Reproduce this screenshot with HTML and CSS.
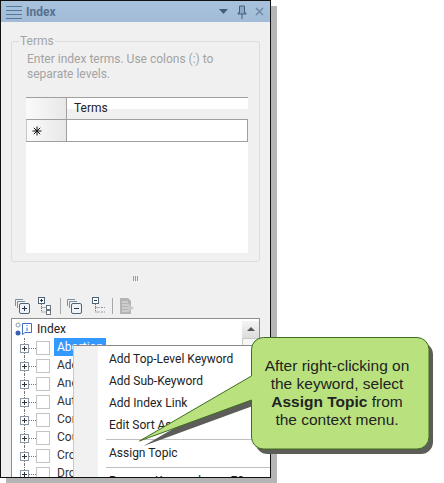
FILE: index.html
```html
<!DOCTYPE html>
<html>
<head>
  <title>Index</title>
  <link rel="stylesheet" href="styles.css">
</head>
<body>
  <div class="panel">
    <div class="titlebar">
      <svg class="grip-lines" width="16" height="18" viewBox="0 0 16 18">
        <path d="M0 3.500H16M0 7.500H16M0 11.500H16M0 15.500H16" stroke="#54779c" fill="none"/>
      </svg>
      <span class="title">Index</span>
      <svg class="win-icons" width="46" height="16" viewBox="0 0 46 16">
        <path d="M0 5H9L4.500 10Z" fill="#3f5f80"/>
        <path d="M20.500 2H25.500V9H27V10H19V9H20.500ZM23 10V15" fill="#8fa9c4" stroke="#3f5f80"/>
        <path d="M37 4L44 11M44 4L37 11" stroke="#6f8aa6" stroke-width="1.600" fill="none"/>
      </svg>
    </div>

    <div class="body">
      <div class="terms-box">
        <div class="legend">Terms</div>
        <p class="hint">Enter index terms. Use colons (:) to separate levels.</p>
        <div class="grid">
          <div class="grid-row head-row">
            <div class="corner"></div>
            <div class="col-head">Terms</div>
          </div>
          <div class="grid-row new-row">
            <div class="corner star">
              <svg width="10" height="10" viewBox="0 0 10 10">
                <path d="M5 0.500V9.500M0.500 5H9.500M1.800 1.800L8.200 8.200M8.200 1.800L1.800 8.200" stroke="#111" fill="none"/>
              </svg>
            </div>
            <div class="cell"></div>
          </div>
        </div>
      </div>

      <div class="splitter">
        <span></span><span></span><span></span>
      </div>

      <div class="toolbar">
        <svg width="18" height="18" viewBox="0 0 18 18">
          <path d="M1.500 9V2.500H9M3.500 11V4.500H11" fill="none" stroke="#7e8f9e"/>
          <rect x="5.500" y="6.500" width="10" height="10" rx="1.500" fill="#eef3f7" stroke="#4f6477"/>
          <path d="M8 11.500H13M10.500 9V14" stroke="#28384a" fill="none"/>
        </svg>
        <svg class="tree-icon" width="14" height="18" viewBox="0 0 14 18">
          <rect x="0.500" y="0.500" width="6" height="6" fill="#fff" stroke="#4f6477"/>
          <path d="M2 3.500H5M3.500 2V5" stroke="#28384a" fill="none"/>
          <path d="M3.500 7V15H8M3.500 10.500H8" stroke="#66727e" stroke-dasharray="1 1" fill="none"/>
          <rect x="8.500" y="8.500" width="4" height="4" fill="#fff" stroke="#66727e"/>
          <rect x="8.500" y="13.500" width="4" height="4" fill="#fff" stroke="#66727e"/>
        </svg>
        <i class="tool-sep first-sep"></i>
        <svg width="18" height="18" viewBox="0 0 18 18">
          <path d="M1.500 9V2.500H9M3.500 11V4.500H11" fill="none" stroke="#7e8f9e"/>
          <rect x="5.500" y="6.500" width="10" height="10" rx="1.500" fill="#eef3f7" stroke="#4f6477"/>
          <path d="M8 11.500H13" stroke="#28384a" fill="none"/>
        </svg>
        <svg class="tree-icon collapse-tree" width="14" height="18" viewBox="0 0 14 18">
          <rect x="0.500" y="0.500" width="6" height="6" fill="#fff" stroke="#4f6477"/>
          <path d="M2 3.500H5" stroke="#28384a" fill="none"/>
          <path d="M3.500 7V15H8M3.500 10.500H8" stroke="#66727e" stroke-dasharray="1 1" fill="none"/>
          <path d="M9 10.500H13M9 15H13" stroke="#8a96a2" stroke-dasharray="2 1" fill="none"/>
        </svg>
        <i class="tool-sep"></i>
        <svg width="16" height="18" viewBox="0 0 16 18">
          <path d="M1 1H9L12 4V17H1Z" fill="#b4b4b4"/>
          <path d="M3 5H9M3 8H10M3 11H10M3 14H10" stroke="#e4e4e4" fill="none"/>
          <path d="M9 7L15 11L9 15Z" fill="#c8c8c8"/>
        </svg>
      </div>

      <div class="tree">
        <div class="tree-root">
          <svg width="20" height="16" viewBox="0 0 20 16">
            <circle cx="3" cy="4" r="2" fill="#fff" stroke="#8a9bb0"/>
            <circle cx="3" cy="12" r="2.500" fill="#3c5fae"/>
            <path d="M7.500 2.500H16.500V11.500H10L7.500 13.500Z" fill="#fff" stroke="#3c6fc0"/>
            <path d="M12 4V5M12 6.500V10" stroke="#3c6fc0" fill="none"/>
          </svg>
          <span>Index</span>
        </div>
        <div class="tree-row"><b class="plus"></b><b class="check"></b><span class="kw selected">Abortion</span></div>
        <div class="tree-row"><b class="plus"></b><b class="check"></b><span class="kw">Adoption</span></div>
        <div class="tree-row"><b class="plus"></b><b class="check"></b><span class="kw">Anemia</span></div>
        <div class="tree-row"><b class="plus"></b><b class="check"></b><span class="kw">Autism</span></div>
        <div class="tree-row"><b class="plus"></b><b class="check"></b><span class="kw">Contraception</span></div>
        <div class="tree-row"><b class="plus"></b><b class="check"></b><span class="kw">Cough</span></div>
        <div class="tree-row"><b class="plus"></b><b class="check"></b><span class="kw">Croup</span></div>
        <div class="tree-row"><b class="plus"></b><b class="check"></b><span class="kw">Drowning</span></div>
        <div class="scrollbar">
          <div class="scroll-up"></div>
          <div class="scroll-track"></div>
        </div>
      </div>
    </div>

    <div class="context-menu">
      <div class="menu-item">Add Top-Level Keyword</div>
      <div class="menu-item">Add Sub-Keyword</div>
      <div class="menu-item">Add Index Link</div>
      <div class="menu-item">Edit Sort As</div>
      <div class="menu-sep"></div>
      <div class="menu-item">Assign Topic</div>
      <div class="menu-sep"></div>
      <div class="menu-item">Remove Keyword<span class="key">F2</span></div>
    </div>
  </div>

  <div class="callout">
    <svg class="callout-shape" width="300" height="125" viewBox="0 0 300 125">
      <path d="M124.500 0.500H278A12 12 0 0 1 290 12.500V100A12 12 0 0 1 278 112H124.500A12 12 0 0 1 112.500 100V63L0.500 104L112.500 39V12.500A12 12 0 0 1 124.500 0.500Z" transform="translate(4 5)" fill="#5c5d58"/>
      <path d="M124.500 0.500H278A12 12 0 0 1 290 12.500V100A12 12 0 0 1 278 112H124.500A12 12 0 0 1 112.500 100V63L0.500 104L112.500 39V12.500A12 12 0 0 1 124.500 0.500Z" fill="#b9e27f" stroke="#3f6b22"/>
    </svg>
    <div class="callout-text">After right-clicking on<br>the keyword, select<br><strong>Assign Topic</strong> from<br>the context menu.</div>
  </div>
</body>
</html>
```

FILE: styles.css
```css
body {
  margin: 0;
  background-color: #fff;
  font-family: Roboto, sans-serif;
  position: relative;
  height: 483px;
  overflow: hidden;
}

.panel {
  position: relative;
  width: 269px;
  height: 476px;
  border: 1px solid #111;
  background-color: #f0f0f0;
  box-shadow: 6px 6px 0 #b5b5b5;
  overflow: hidden;
}

.titlebar {
  display: flex;
  align-items: center;
  height: 21px;
  background: linear-gradient(#a9c2dc, #a2bcd8);
}

.grip-lines {
  margin-left: 5px;
  flex: none;
}

.title {
  margin-left: 4px;
  font-size: 12px;
  font-weight: 700;
  color: #56728e;
}

.win-icons {
  margin-left: auto;
  margin-right: 5px;
}

.body {
  padding: 19px 10px 0 10px;
}

.terms-box {
  position: relative;
  height: 221px;
  box-sizing: border-box;
  border: 1px solid #dcdcdc;
  border-radius: 3px;
  padding: 10px 11px 0 14px;
}

.legend {
  position: absolute;
  top: -9px;
  left: 7px;
  padding: 0 1px;
  background-color: #f0f0f0;
  font-size: 12px;
  line-height: 16px;
  color: #a3a3a3;
}

.hint {
  margin: 0 0 0 1px;
  width: 200px;
  font-size: 12px;
  line-height: 15px;
  color: #a3a3a3;
}

.grid {
  height: 156px;
  margin-top: 15px;
  background-color: #fff;
}

.grid-row {
  display: flex;
}

.head-row {
  height: 21px;
  border-top: 1px solid #a0a0a0;
}

.new-row {
  height: 21px;
  border-top: 1px solid #a0a0a0;
  border-bottom: 1px solid #a0a0a0;
}

.corner {
  width: 40px;
  flex: none;
  border-right: 1px solid #a0a0a0;
  background: linear-gradient(90deg, #fafafa, #e8e8e8);
}

.star {
  display: flex;
  align-items: center;
  box-sizing: border-box;
  width: 41px;
  padding-left: 5px;
  border-left: 1px solid #c8c8c8;
}

.col-head {
  flex: 1;
  padding-left: 7px;
  font-size: 12px;
  line-height: 21px;
  color: #222;
  background: linear-gradient(#fff 50%, #f0f0f0 50%);
}

.cell {
  flex: 1;
  border-right: 1px solid #a0a0a0;
}

.splitter {
  display: flex;
  justify-content: center;
  gap: 1px;
  height: 5px;
  margin-top: 14px;
}

.splitter span {
  width: 1px;
  background-color: #9b9b9b;
}

.toolbar {
  display: flex;
  align-items: center;
  height: 20px;
  margin-top: 15px;
  padding-left: 3px;
  gap: 6px;
}

.tool-sep {
  width: 1px;
  height: 16px;
  background-color: #a8a8a8;
}

.first-sep {
  margin-left: 2px;
  margin-right: -1px;
}

.collapse-tree {
  margin-left: 2px;
}

.tree {
  position: relative;
  height: 200px;
  box-sizing: border-box;
  margin-top: 2px;
  border: 1px solid #8e8e8e;
  background-color: #fff;
  padding-top: 1px;
}

.tree-root {
  display: flex;
  align-items: center;
  height: 18px;
  padding-left: 3px;
  font-size: 12px;
  color: #222;
}

.tree-root span {
  margin-left: 2px;
}

.tree-row {
  position: relative;
  display: flex;
  align-items: center;
  height: 18px;
  padding-left: 8px;
  font-size: 12px;
  color: #333;
}

/* dotted connectors */
.tree-row::before {
  content: "";
  position: absolute;
  left: 12px;
  top: 0;
  height: 18px;
  border-left: 1px dotted #777;
}

.tree-row::after {
  content: "";
  position: absolute;
  left: 17px;
  top: 10px;
  width: 7px;
  border-top: 1px dotted #777;
}

.plus {
  position: relative;
  width: 7px;
  height: 7px;
  margin-top: 2px;
  border: 1px solid #8a97a8;
  background: #fff;
  flex: none;
  z-index: 1;
}

.plus::before {
  content: "";
  position: absolute;
  left: 1px;
  top: 3px;
  width: 5px;
  height: 1px;
  background-color: #333;
}

.plus::after {
  content: "";
  position: absolute;
  left: 3px;
  top: 1px;
  width: 1px;
  height: 5px;
  background-color: #333;
}

.check {
  width: 12px;
  height: 12px;
  margin-left: 7px;
  margin-top: 1px;
  border: 1px solid #c4c4c4;
  background-color: #fff;
  flex: none;
}

.kw {
  margin-left: 4px;
  padding: 0 3px;
  line-height: 18px;
}

.selected {
  background-color: #3399ff;
  color: #fff;
}

.scrollbar {
  position: absolute;
  top: 2px;
  right: 0;
  bottom: 0;
  width: 17px;
  background-color: #f0f0f0;
}

.scroll-up {
  height: 17px;
  background: linear-gradient(#f4f4f4, #dcdcdc);
  position: relative;
}

.scroll-up::before {
  content: "";
  position: absolute;
  left: 5px;
  top: 6px;
  border: 4px solid transparent;
  border-top: 0;
  border-bottom-color: #555;
}

.scroll-track {
  height: 100%;
  box-sizing: border-box;
  border: 1px solid #c8c8c8;
  background-color: #f7f7f7;
}

.context-menu {
  position: absolute;
  left: 72px;
  top: 344px;
  right: 0;
  bottom: 0;
  box-sizing: border-box;
  padding-top: 2px;
  border-top: 1px solid #8a8a8a;
  border-left: 1px solid #c8c8c8;
  background: linear-gradient(90deg, #f1f1f1 24px, #fff 24px);
  font-size: 12px;
  color: #222;
}

.menu-item {
  display: flex;
  height: 22px;
  line-height: 22px;
  padding-left: 35px;
  padding-right: 26px;
  white-space: nowrap;
}

.key {
  margin-left: auto;
}

.menu-sep {
  height: 1px;
  margin: 3px 0 2px 32px;
  background-color: #c0c0c0;
}

.callout {
  position: absolute;
  left: 139px;
  top: 337px;
  width: 300px;
  height: 125px;
}

.callout-shape {
  display: block;
}

.callout-text {
  position: absolute;
  left: 123px;
  top: 20px;
  width: 150px;
  text-align: center;
  font-family: "Liberation Sans", Arial, sans-serif;
  font-size: 15.500px;
  line-height: 18px;
  white-space: nowrap;
  color: #222;
}
```
